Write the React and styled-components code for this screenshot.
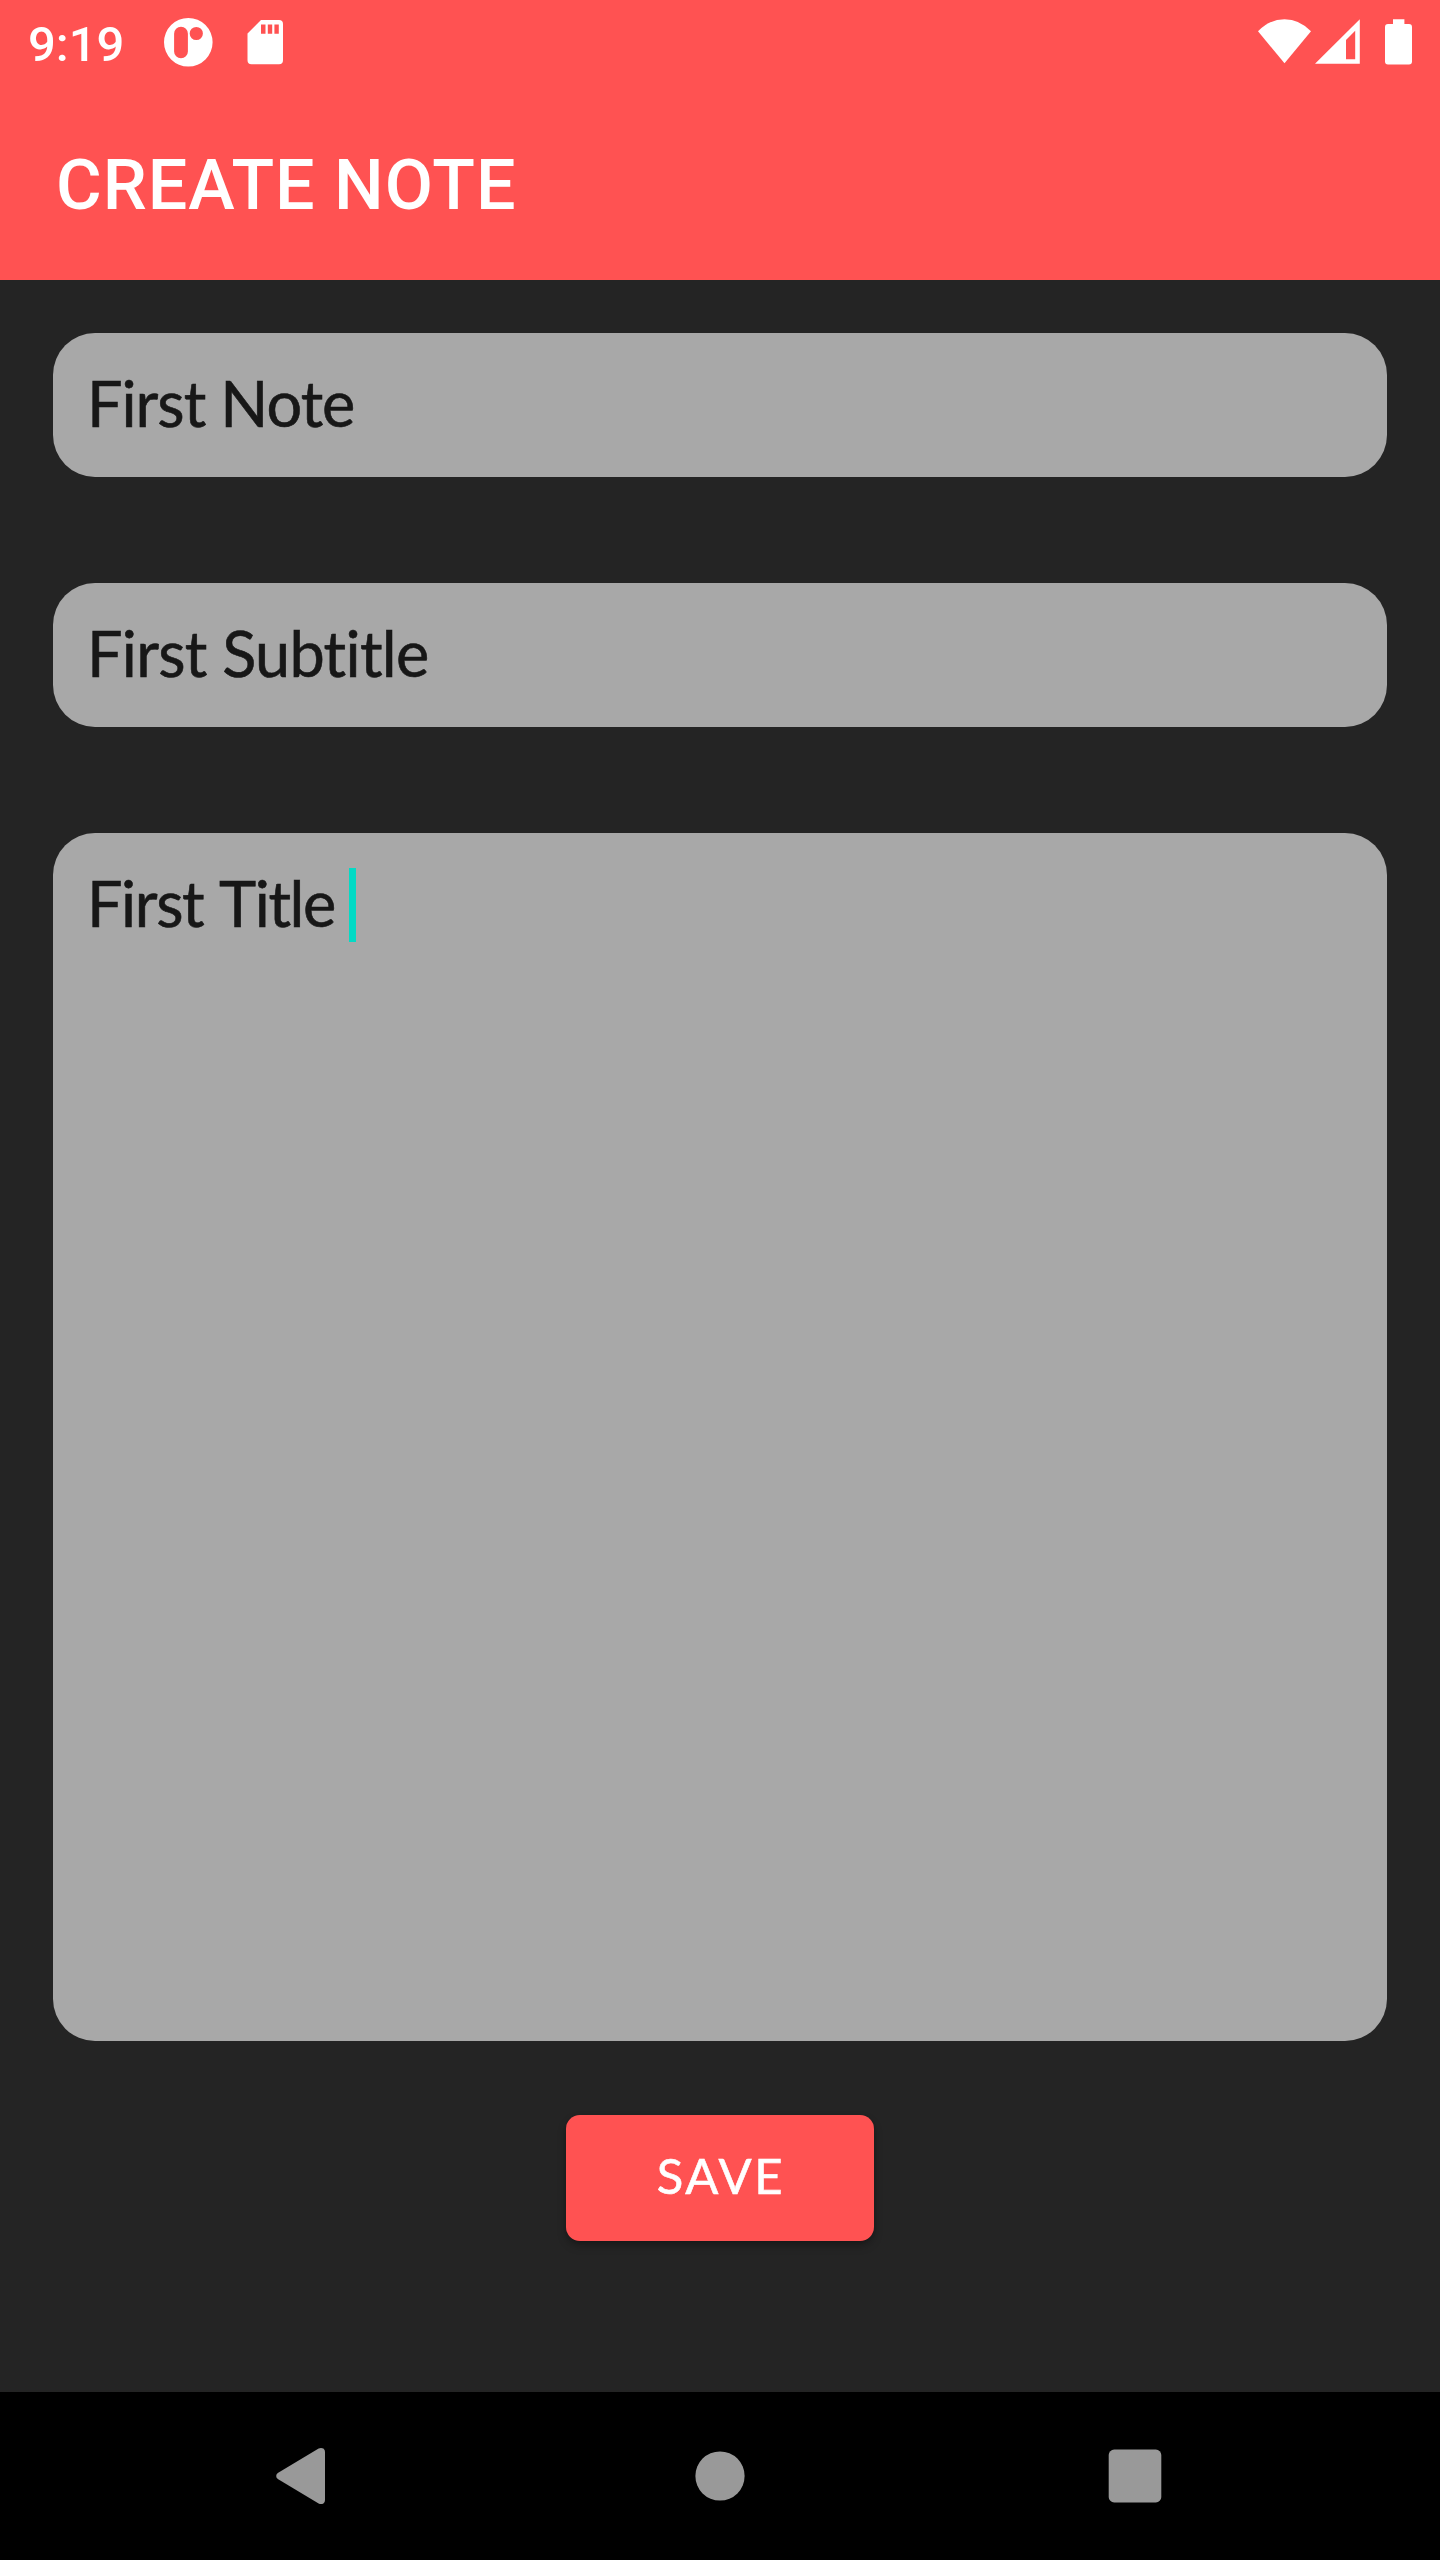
import React from "react";
import styled, { createGlobalStyle } from "styled-components";

const colors = {
  accent: "#ff5252",
  background: "#242424",
  field: "#a8a8a8",
  ink: "#171717",
  caret: "#03dac5",
  nav: "#999999",
};

const GlobalStyle = createGlobalStyle`
  *, *::before, *::after {
    box-sizing: border-box;
  }

  body {
    margin: 0;
    background: ${colors.background};
  }
`;

const Screen = styled.div`
  display: flex;
  flex-direction: column;
  width: 1440px;
  height: 2560px;
  background: ${colors.background};
  font-family: Lato, "Open Sans", sans-serif;
`;

const StatusBar = styled.header`
  display: flex;
  justify-content: space-between;
  align-items: flex-start;
  height: 84px;
  padding: 0 27px 0 28px;
  background: ${colors.accent};
`;

const StatusGroup = styled.div`
  display: flex;
  align-items: flex-start;
`;

const Clock = styled.span`
  width: 136px;
  padding-top: 16px;
  color: #fff;
  font: 500 49px/57px Roboto, sans-serif;
`;

const StatusIcon = styled.svg`
  display: block;
  width: ${(p) => p.$width}px;
  height: 84px;
  margin-left: ${(p) => p.$gap || 0}px;
  fill: #fff;
`;

const AppBar = styled.div`
  display: flex;
  align-items: center;
  height: 196px;
  padding: 6px 56px 0;
  background: ${colors.accent};
`;

const Title = styled.h1`
  margin: 0;
  color: #fff;
  font: 500 70px/82px Roboto, sans-serif;
  letter-spacing: 1px;
`;

const Form = styled.main`
  flex: 1;
  display: flex;
  flex-direction: column;
  align-items: center;
  gap: 106px;
  padding: 53px 53px 0;
`;

const Field = styled.div`
  display: flex;
  align-items: flex-start;
  width: 100%;
  height: ${(p) => p.$height}px;
  padding: 32px 34px 0;
  border-radius: 42px;
  background: ${colors.field};
`;

const FieldText = styled.span`
  min-width: 250px;
  color: ${colors.ink};
  font-size: 63px;
  line-height: 75px;
  letter-spacing: ${(p) => p.$tracking}px;
  word-spacing: ${(p) => p.$wordGap || 0}px;
  font-variant-ligatures: none;
  white-space: nowrap;
  -webkit-text-stroke: 0.6px ${colors.ink};
`;

const Caret = styled.span`
  width: 7px;
  height: 74px;
  margin: 3px 0 0 12px;
  background: ${colors.caret};
`;

const SaveButton = styled.button`
  width: 308px;
  height: 126px;
  margin-top: -32px;
  padding: 0 0 6px 2px;
  border: 0;
  border-radius: 14px;
  background: ${colors.accent};
  box-shadow: 0 5px 9px rgba(0, 0, 0, 0.26), 0 1px 3px rgba(0, 0, 0, 0.12);
  color: #fff;
  font: 400 49px/58px Lato, "Open Sans", sans-serif;
  letter-spacing: 2.7px;
  -webkit-text-stroke: 0.6px #fff;
`;

const NavBar = styled.nav`
  display: flex;
  justify-content: center;
  align-items: center;
  gap: 345px;
  height: 168px;
  background: #000;
`;

const NavIcon = styled.svg`
  display: block;
  width: 70px;
  height: 70px;
  fill: ${colors.nav};
`;

export default function App() {
  return (
    <Screen>
      <GlobalStyle />
      <StatusBar>
        <StatusGroup>
          <Clock>9:19</Clock>
          <StatusIcon $width={49} viewBox="164 0 49 84">
            <path
              fillRule="evenodd"
              d="M188.3 18a24.3 24.3 0 1 0 0 48.6a24.3 24.3 0 1 0 0-48.6ZM181 26.8a6.9 6.9 0 0 1 6.9 6.9V51.4a6.9 6.9 0 0 1-13.8 0V33.7a6.9 6.9 0 0 1 6.9-6.9ZM196.3 26.9a6.6 6.6 0 1 1 0 13.2a6.6 6.6 0 1 1 0-13.2Z"
            />
          </StatusIcon>
          <StatusIcon $width={36} $gap={34} viewBox="247 0 36 84">
            <path
              fillRule="evenodd"
              d="M261 20H279a4 4 0 0 1 4 4V60.3a4 4 0 0 1-4 4H251.5a4 4 0 0 1-4-4V33.5ZM261 24.5V33.7H265.5V24.5ZM267.8 24.5V33.7H272.2V24.5ZM274.4 24.5V33.7H278.8V24.5Z"
            />
          </StatusIcon>
        </StatusGroup>
        <StatusGroup>
          <StatusIcon $width={54} viewBox="1258 0 54 84">
            <path d="M1284.5 63.3L1258 31.3Q1269.5 19.2 1284.5 19.2T1311 31.3Z" />
          </StatusIcon>
          <StatusIcon $width={46} $gap={3} viewBox="1315 0 46 84">
            <path
              fillRule="evenodd"
              d="M1315 63.7L1359.8 19.3V63.7ZM1346 40V59.2H1355.2V30.8Z"
            />
          </StatusIcon>
          <StatusIcon $width={28} $gap={24} viewBox="1385 0 28 84">
            <path d="M1393 19.2H1404.4V24H1409a3 3 0 0 1 3 3V61.4a3 3 0 0 1-3 3H1388a3 3 0 0 1-3-3V27a3 3 0 0 1 3-3H1393Z" />
          </StatusIcon>
        </StatusGroup>
      </StatusBar>

      <AppBar>
        <Title>CREATE NOTE</Title>
      </AppBar>

      <Form>
        <Field $height={144}>
          <FieldText $tracking={-1}>First Note</FieldText>
        </Field>
        <Field $height={144}>
          <FieldText $tracking={-0.7}>First Subtitle</FieldText>
        </Field>
        <Field $height={1208}>
          <FieldText $tracking={-1.4} $wordGap={3}>First Title</FieldText>
          <Caret />
        </Field>
        <SaveButton type="button">SAVE</SaveButton>
      </Form>

      <NavBar>
        <NavIcon viewBox="270 2441 70 70">
          <path d="M277.8 2473L318.6 2448.6Q321 2447.2 323.4 2448.6Q325 2449.8 325 2452V2500Q325 2502.2 323.4 2503.4Q321 2504.8 318.6 2503.4L277.8 2479Q276.2 2478 276.2 2476T277.8 2473Z" />
        </NavIcon>
        <NavIcon viewBox="685 2441 70 70">
          <circle cx="720" cy="2476" r="24.6" />
        </NavIcon>
        <NavIcon viewBox="1100 2441 70 70">
          <rect x="1108.7" y="2449.6" width="52.6" height="52.8" rx="5.5" />
        </NavIcon>
      </NavBar>
    </Screen>
  );
}
